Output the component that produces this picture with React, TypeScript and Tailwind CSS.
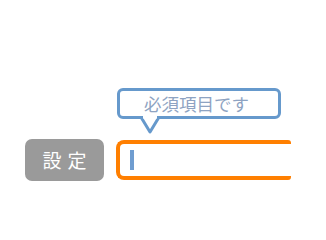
export default function App() {
  return (
    <div className="h-[215px] w-[326px] bg-white font-['Noto_Sans_CJK_JP',sans-serif]">
      <div className="flex items-end gap-[12px] pl-[25px] pt-[88px]">
        <button className="mb-[-1px] flex h-[42px] w-[79px] items-center justify-center rounded-[7px] bg-[#9a9a9a] pl-[6px] text-[19px] tracking-[6px] text-white">
          設定
        </button>
        <div className="flex flex-col">
          <div className="relative ml-px flex h-[31px] w-[164px] items-center justify-center rounded-[6px] border-[3px] border-[#6699cc] bg-white pr-[5px]">
            <span className="text-[17.5px] leading-none text-[#8ea3c2]">必須項目です</span>
            <svg className="absolute left-[20px] top-[25px]" width="20" height="20" viewBox="0 0 20 20">
              <path d="M1.5 2 L10 16 L18.5 2" fill="white" stroke="#6699cc" strokeWidth="3" strokeLinejoin="round" />
              <rect x="3" y="0" width="14" height="2.5" fill="white" />
            </svg>
          </div>
          <div className="mt-[21px] flex h-[40px] w-[175px] items-center rounded-l-[8px] rounded-r-[3px] border-[4px] border-r-0 border-[#ff7f00] bg-white">
            <div className="ml-[10px] h-[20px] w-[4px] bg-[#6f9dd0]" />
          </div>
        </div>
      </div>
    </div>
  );
}
